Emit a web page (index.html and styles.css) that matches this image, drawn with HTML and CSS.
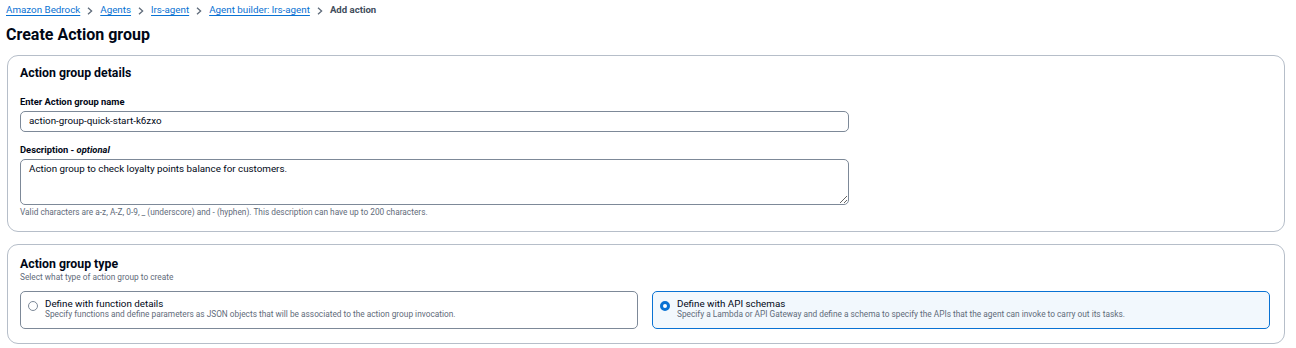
FILE: index.html
```html
<!DOCTYPE html>
<html>

<head>
  <meta charset="UTF-8">
  <meta name="viewport" content="width=device-width, initial-scale=1.0">
  <title>Create Action group</title>
  <link rel="stylesheet" href="styles.css">
</head>

<body>
  <div class="page">
    <nav class="crumbs">
      <a href="#">Amazon Bedrock</a>
      <svg class="chev" viewBox="0 0 8 8"><path d="M2 0.8 L5.6 4 L2 7.2" /></svg>
      <a href="#">Agents</a>
      <svg class="chev" viewBox="0 0 8 8"><path d="M2 0.8 L5.6 4 L2 7.2" /></svg>
      <a href="#">lrs-agent</a>
      <svg class="chev" viewBox="0 0 8 8"><path d="M2 0.8 L5.6 4 L2 7.2" /></svg>
      <a href="#">Agent builder: lrs-agent</a>
      <svg class="chev" viewBox="0 0 8 8"><path d="M2 0.8 L5.6 4 L2 7.2" /></svg>
      <span class="current">Add action</span>
    </nav>

    <h1>Create Action group</h1>

    <div class="card">
      <h2>Action group details</h2>
      <div class="field">
        <label for="ag_name">Enter Action group name</label>
        <input id="ag_name" type="text" value="action-group-quick-start-k6zxo" />
      </div>
      <div class="field">
        <label for="ag_desc">Description - <i>optional</i></label>
        <textarea id="ag_desc">Action group to check loyalty points balance for customers.</textarea>
        <p class="hint">Valid characters are a-z, A-Z, 0-9, _ (underscore) and - (hyphen). This description can have up to 200 characters.</p>
      </div>
    </div>

    <div class="card card-type">
      <h2>Action group type</h2>
      <p class="sub">Select what type of action group to create</p>
      <div class="tiles">
        <div class="tile">
          <span class="radio"></span>
          <div class="tile-text">
            <div class="tile-label">Define with function details</div>
            <div class="tile-desc">Specify functions and define parameters as JSON objects that will be associated to the action group invocation.</div>
          </div>
        </div>
        <div class="tile checked">
          <span class="radio"></span>
          <div class="tile-text">
            <div class="tile-label">Define with API schemas</div>
            <div class="tile-desc">Specify a Lambda or API Gateway and define a schema to specify the APIs that the agent can invoke to carry out its tasks.</div>
          </div>
        </div>
      </div>
    </div>
  </div>
</body>

</html>
```

FILE: styles.css
```css
* {
  padding: 0;
  margin: 0;
  box-sizing: border-box;
}

body {
  background: #fff;
  font-family: Roboto, "Liberation Sans", sans-serif;
  color: #000716;
}

.page {
  padding: 3px 11px 0 6px;
}

.crumbs {
  display: flex;
  align-items: center;
  height: 14px;
  font-size: 9.8px;
  line-height: 14px;
}

.crumbs a {
  color: #0972d3;
  text-decoration: underline;
  text-underline-offset: 2px;
}

.chev {
  width: 8px;
  height: 8px;
  margin: 1px 6px 0 6px;
  fill: none;
  stroke: #5f6b7a;
  stroke-width: 1.3;
}

.current {
  color: #414d5c;
  font-size: 9.6px;
  font-weight: 700;
}

h1 {
  font-size: 16px;
  line-height: 20px;
  font-weight: 700;
  margin: 8px 0 10px 0;
}

.card {
  margin-left: 1px;
  margin-bottom: 12px;
  border: 1px solid #b6bec9;
  border-radius: 11px;
  padding: 9px 14px 13px 12px;
}

.card-type {
  padding-top: 11px;
}

h2 {
  font-size: 12.3px;
  line-height: 16px;
  font-weight: 700;
}

.field {
  margin-top: 11px;
}

.card h2 + .field {
  margin-top: 14px;
}

label {
  display: block;
  font-size: 9.4px;
  line-height: 13px;
  font-weight: 700;
  margin-bottom: 3px;
}

input,
textarea {
  display: block;
  width: 829px;
  font-family: Roboto, "Liberation Sans", sans-serif;
  font-size: 9.8px;
  line-height: 13px;
  color: #000716;
  border: 1px solid #7d8998;
  border-radius: 5px;
  outline: none;
  padding: 0 8px;
}

input {
  height: 21px;
  padding-bottom: 2px;
}

textarea {
  height: 46px;
  padding: 2px 8px;
  resize: vertical;
}

.hint,
.sub {
  font-size: 8.3px;
  line-height: 11px;
  color: #5f6b7a;
}

.hint {
  margin-top: 2px;
}

.tiles {
  display: grid;
  grid-template-columns: 1fr 1fr;
  gap: 14px;
  margin-top: 8px;
  margin-bottom: 1px;
}

.tile {
  display: flex;
  height: 38px;
  border: 1px solid #7d8998;
  border-radius: 5px;
  padding: 6.5px 10px 0 6.5px;
}

.tile.checked {
  border-color: #0972d3;
  background: #f2f8fd;
}

.radio {
  flex: none;
  width: 10px;
  height: 10px;
  margin-top: 2px;
  margin-right: 7.5px;
  border-radius: 50%;
  border: 1px solid #7d8998;
  background: #fff;
}

.checked .radio {
  border: 3.4px solid #0972d3;
}

.tile-label {
  font-size: 9.8px;
  line-height: 10px;
}

.tile-desc {
  font-size: 8.3px;
  line-height: 11px;
  color: #5f6b7a;
}
```
